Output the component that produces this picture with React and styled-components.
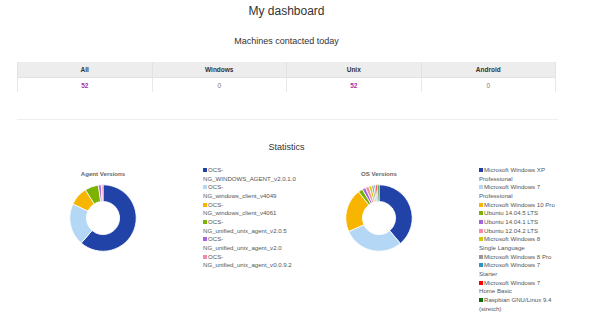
import React from "react";
import styled, { createGlobalStyle } from "styled-components";

const GlobalStyle = createGlobalStyle`
  html, body { margin: 0; padding: 0; background: #fff; }
  body { font-family: "Liberation Sans", Arial, sans-serif; color: #333; }
`;

const Page = styled.div`
  width: 539px;
  padding: 4px 0 0 17px;
`;

const Title = styled.h1`
  margin: 0;
  font-size: 12px;
  line-height: 14px;
  font-weight: normal;
  text-align: center;
  color: #333;
`;

const SubTitle = styled.h2`
  margin: ${(p) => p.$top}px 0 0;
  font-size: 9px;
  line-height: 11px;
  font-weight: normal;
  text-align: center;
  color: #333;
`;

const Table = styled.table`
  width: 539px;
  margin-top: 15px;
  border-collapse: collapse;
  table-layout: fixed;
  font-size: 6.5px;
`;

const Th = styled.th`
  height: 15px;
  padding: 0;
  background: #ededed;
  border: 1px solid #e2e2e2;
  border-top: none;
  font-weight: bold;
  color: #333;
  text-align: center;
`;

const Td = styled.td`
  height: 14px;
  padding: 0;
  border-left: 1px solid #e8e8e8;
  border-right: 1px solid #e8e8e8;
  text-align: center;
  color: ${(p) => (p.$hot ? "#a8369f" : "#777")};
  font-weight: ${(p) => (p.$hot ? "bold" : "normal")};
`;

const Rule = styled.hr`
  margin: 27px 0 0;
  border: none;
  border-top: 1px solid #eee;
  width: 541px;
`;

const StatsRow = styled.div`
  margin-top: 13px;
  display: grid;
  grid-template-columns: 276px 276px;
`;

const StatCol = styled.div`
  display: flex;
  align-items: flex-start;
`;

const ChartBox = styled.div`
  flex: none;
  width: 172px;
  display: flex;
  flex-direction: column;
  align-items: center;
  padding-top: 4px;
`;

const ChartTitle = styled.div`
  font-size: 6.1px;
  line-height: 8px;
  font-weight: bold;
  color: #666;
`;

const DonutSvg = styled.svg`
  margin-top: 6px;
  display: block;
`;

const Legend = styled.ul`
  flex: none;
  list-style: none;
  margin: 0 0 0 14px;
  padding: 0;
  width: ${(p) => p.$w}px;
  font-size: 6.1px;
  line-height: 8.67px;
  color: #555;
`;

const LegendItem = styled.li`
  margin: 0;
  padding: 0;
`;

const Swatch = styled.span`
  display: inline-block;
  width: 4px;
  height: 4px;
  margin-right: 1px;
  background: ${(p) => p.$c};
`;

const agentData = [
  { label: "OCS-NG_WINDOWS_AGENT_v2.0.1.0", v: 221, c: "#2143a8" },
  { label: "OCS-NG_windows_client_v4049", v: 74, c: "#b3d7f5" },
  { label: "OCS-NG_windows_client_v4061", v: 33, c: "#f7b500" },
  { label: "OCS-NG_unified_unix_agent_v2.0.5", v: 24, c: "#7cb300" },
  { label: "OCS-NG_unified_unix_agent_v2.0", v: 5, c: "#a665e0" },
  { label: "OCS-NG_unified_unix_agent_v0.0.9.2", v: 3, c: "#f28bab" },
];

const osData = [
  { label: "Microsoft Windows XP Professional", v: 140, c: "#2143a8" },
  { label: "Microsoft Windows 7 Professional", v: 106, c: "#b3d7f5" },
  { label: "Microsoft Windows 10 Pro", v: 76, c: "#f7b500" },
  { label: "Ubuntu 14.04.5 LTS", v: 8, c: "#7cb300" },
  { label: "Ubuntu 14.04.1 LTS", v: 6, c: "#a665e0" },
  { label: "Ubuntu 12.04.2 LTS", v: 6, c: "#f28bab" },
  { label: "Microsoft Windows 8 Single Language", v: 5, c: "#cccc00" },
  { label: "Microsoft Windows 8 Pro", v: 4, c: "#999999" },
  { label: "Microsoft Windows 7 Starter", v: 3, c: "#2196c8" },
  { label: "Microsoft Windows 7 Home Basic", v: 3, c: "#ff0000" },
  { label: "Raspbian GNU/Linux 9.4 (stretch)", v: 3, c: "#0a6e0a" },
];

function pt(cx, cy, r, a) {
  const rad = (a * Math.PI) / 180;
  return [cx + r * Math.sin(rad), cy - r * Math.cos(rad)];
}

function arcPath(cx, cy, r0, r1, a0, a1) {
  const large = a1 - a0 > 180 ? 1 : 0;
  const [x1, y1] = pt(cx, cy, r1, a0);
  const [x2, y2] = pt(cx, cy, r1, a1);
  const [x3, y3] = pt(cx, cy, r0, a1);
  const [x4, y4] = pt(cx, cy, r0, a0);
  return `M${x1} ${y1} A${r1} ${r1} 0 ${large} 1 ${x2} ${y2} L${x3} ${y3} A${r0} ${r0} 0 ${large} 0 ${x4} ${y4} Z`;
}

function Donut({ data }) {
  const total = data.reduce((s, d) => s + d.v, 0);
  let a = 0;
  return (
    <DonutSvg width="68" height="68" viewBox="0 0 68 68">
      {data.map((d, i) => {
        const a0 = a;
        const a1 = a + (d.v / total) * 360;
        a = a1;
        return (
          <path
            key={i}
            d={arcPath(34, 34, 16.6, 33.2, a0, a1)}
            fill={d.c}
            stroke="#fff"
            strokeWidth="0.8"
          />
        );
      })}
    </DonutSvg>
  );
}

function Stat({ title, data, legendWidth }) {
  return (
    <StatCol>
      <ChartBox>
        <ChartTitle>{title}</ChartTitle>
        <Donut data={data} />
      </ChartBox>
      <Legend $w={legendWidth}>
        {data.map((d) => (
          <LegendItem key={d.label}>
            <Swatch $c={d.c} />
            {d.label}
          </LegendItem>
        ))}
      </Legend>
    </StatCol>
  );
}

export default function App() {
  return (
    <>
      <GlobalStyle />
      <Page>
        <Title>My dashboard</Title>
        <SubTitle $top={18}>Machines contacted today</SubTitle>
        <Table>
          <thead>
            <tr>
              <Th>All</Th>
              <Th>Windows</Th>
              <Th>Unix</Th>
              <Th>Android</Th>
            </tr>
          </thead>
          <tbody>
            <tr>
              <Td $hot>52</Td>
              <Td>0</Td>
              <Td $hot>52</Td>
              <Td>0</Td>
            </tr>
          </tbody>
        </Table>
        <Rule />
        <SubTitle $top={22}>Statistics</SubTitle>
        <StatsRow>
          <Stat title="Agent Versions" data={agentData} legendWidth={93.5} />
          <Stat title="OS Versions" data={osData} legendWidth={77.5} />
        </StatsRow>
      </Page>
    </>
  );
}
